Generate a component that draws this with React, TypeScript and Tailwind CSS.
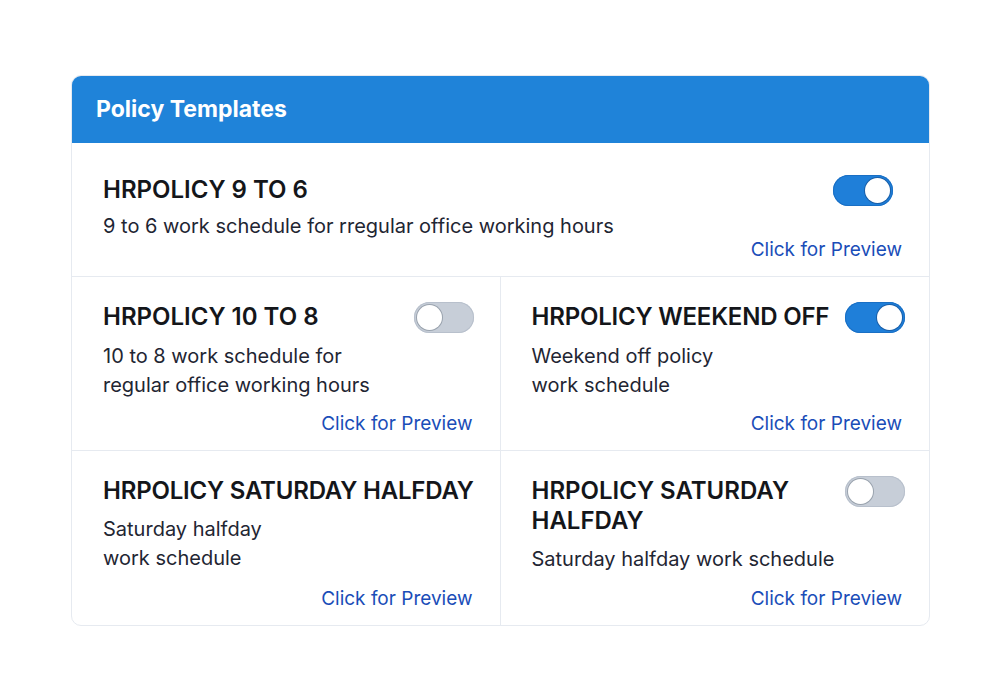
import React from 'react'

const FONT = { fontFamily: 'Inter, "Noto Sans", sans-serif' }

function Toggle({ on }: { on: boolean }) {
  return (
    <div
      className={`flex h-[31px] w-[60px] shrink-0 items-center rounded-full px-[3px] ${
        on ? 'justify-end bg-[#1f7fd9] shadow-[inset_0_0_0_1px_#1a6fc4]' : 'justify-start bg-[#c7ced8] shadow-[inset_0_0_0_1px_#b8c0cc]'
      }`}
    >
      <div
        className={`h-[25px] w-[25px] rounded-full bg-white ${
          on ? 'shadow-[0_0_0_1px_#1a5fa8]' : 'shadow-[0_0_0_1px_#9aa3ae]'
        }`}
      />
    </div>
  )
}

function PreviewLink({ className }: { className?: string }) {
  return (
    <div className={`text-right text-[19px] leading-[24px] text-[#1a4db8] ${className ?? ''}`}>Click for Preview</div>
  )
}

interface CellProps {
  title: string
  lines: string[]
  on?: boolean
  toggleRight?: string
  nowrap?: boolean
}

function Cell({ title, lines, on, toggleRight, nowrap }: CellProps) {
  return (
    <div className="flex h-full flex-col pl-[31px] pr-[27px] pt-[25px] pb-[14px]">
      <div className={`flex items-start justify-between gap-2 ${toggleRight ?? ''}`}>
        <div
          className={`text-[24px] font-semibold leading-[30px] text-[#14161a] ${
            nowrap ? 'whitespace-nowrap tracking-[-0.2px]' : ''
          }`}
        >
          {title}
        </div>
        {on !== undefined && <Toggle on={on} />}
      </div>
      <div className="mt-[9px] text-[20px] leading-[29px] text-[#1f2633]">
        {lines.map((l) => (
          <div key={l}>{l}</div>
        ))}
      </div>
      <div className="flex-1" />
      <PreviewLink />
    </div>
  )
}

export default function App() {
  return (
    <div className="min-h-[700px] w-[1000px] bg-white pt-[75px] pl-[71px]" style={FONT}>
      <div className="w-[859px] overflow-hidden rounded-[10px] border border-[#e6eaf0] bg-white">
        {/* Header */}
        <div className="flex h-[67px] items-center bg-[#1f83d9] pl-[24px]">
          <h1 className="text-[23px] font-bold text-white">Policy Templates</h1>
        </div>

        {/* Featured template */}
        <div className="flex h-[134px] flex-col border-b border-[#e6eaf0] pl-[31px] pr-[27px] pt-[32px]">
          <div className="flex items-start justify-between pr-[9px]">
            <div className="text-[24px] font-semibold leading-[30px] text-[#14161a]">HRPOLICY 9 TO 6</div>
            <Toggle on />
          </div>
          <div className="mt-[6px] text-[20px] leading-[29px] text-[#1f2633]">
            9 to 6 work schedule for rregular office working hours
          </div>
          <PreviewLink className="mt-[-3px]" />
        </div>

        {/* Grid */}
        <div className="grid grid-cols-2">
          <div className="h-[174px] border-b border-r border-[#e6eaf0]">
            <Cell
              title="HRPOLICY 10 TO 8"
              lines={['10 to 8 work schedule for', 'regular office working hours']}
              on={false}
              toggleRight="mr-[-1px]"
            />
          </div>
          <div className="h-[174px] border-b border-[#e6eaf0]">
            <Cell
              title="HRPOLICY WEEKEND OFF"
              lines={['Weekend off policy', 'work schedule']}
              on
              nowrap
              toggleRight="mr-[-3px]"
            />
          </div>
          <div className="h-[174px] border-r border-[#e6eaf0]">
            <Cell title="HRPOLICY SATURDAY HALFDAY" lines={['Saturday halfday', 'work schedule']} nowrap />
          </div>
          <div className="h-[174px]">
            <Cell
              title="HRPOLICY SATURDAY HALFDAY"
              lines={['Saturday halfday work schedule']}
              on={false}
              toggleRight="mr-[-3px]"
            />
          </div>
        </div>
      </div>
    </div>
  )
}
